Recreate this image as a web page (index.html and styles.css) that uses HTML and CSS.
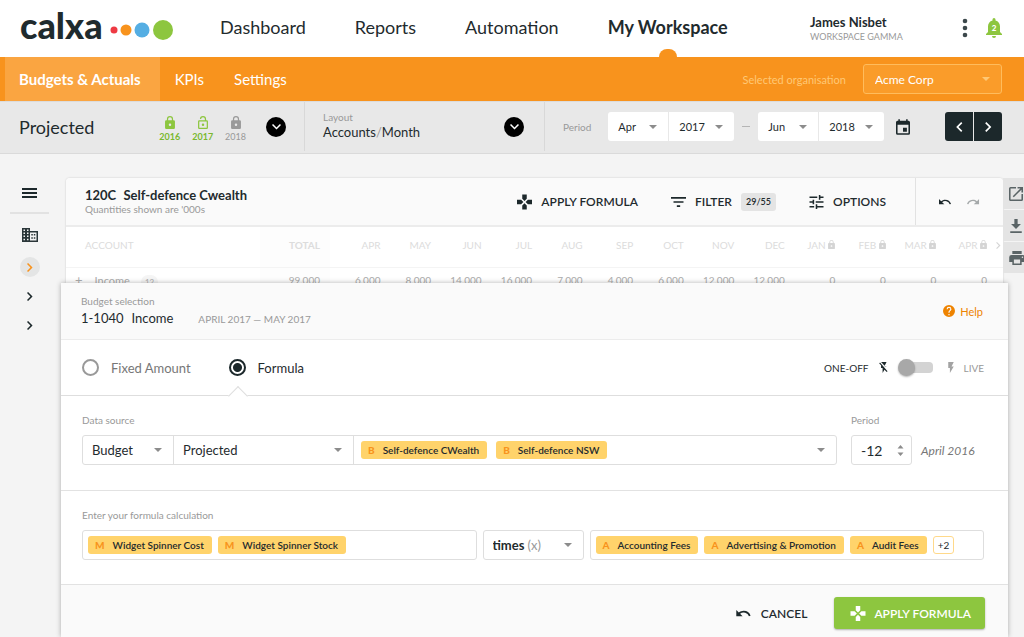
FILE: index.html
```html
<!DOCTYPE html>
<html lang="en">
  <head>
    <meta charset="UTF-8" />
    <meta name="viewport" content="width=device-width, initial-scale=1.0" />
    <title>Calxa - My Workspace</title>
    <link rel="stylesheet" href="styles.css">
  </head>
  <body>
    <!-- shared icons -->
    <svg class="sprite" aria-hidden="true">
      <symbol id="lock" viewBox="0 0 16 21">
        <path d="M14 7h-1V5A5 5 0 0 0 3 5v2H2a2 2 0 0 0-2 2v10a2 2 0 0 0 2 2h12a2 2 0 0 0 2-2V9a2 2 0 0 0-2-2zm-6 9a2 2 0 1 1 0-4 2 2 0 0 1 0 4zm3-9H5V5a3 3 0 0 1 6 0z" />
      </symbol>
      <symbol id="lock-open" viewBox="0 0 16 21">
        <path d="M8 16a2 2 0 1 0 0-4 2 2 0 0 0 0 4zm6-9h-1V5A5 5 0 0 0 3 5h2a3 3 0 0 1 6 0v2H2a2 2 0 0 0-2 2v10a2 2 0 0 0 2 2h12a2 2 0 0 0 2-2V9a2 2 0 0 0-2-2zm0 12H2V9h12z" />
      </symbol>
      <symbol id="chevron-right" viewBox="0 0 8 12">
        <path d="M0 10.6 4.6 6 0 1.4 1.4 0l6 6-6 6z" />
      </symbol>
      <symbol id="chevron-left" viewBox="0 0 8 12">
        <path d="M7.4 1.4 6 0 0 6l6 6 1.4-1.4L2.8 6z" />
      </symbol>
      <symbol id="chevron-down" viewBox="0 0 12 8">
        <path d="M1.4 0 6 4.6 10.6 0 12 1.4l-6 6-6-6z" />
      </symbol>
      <symbol id="pad" viewBox="0 0 20 20">
        <path d="M13 5.500V0H7v5.500l3 3zM5.500 7H0v6h5.500l3-3zM7 14.500V20h6v-5.500l-3-3zM14.500 7l-3 3 3 3H20V7z" />
      </symbol>
      <symbol id="undo" viewBox="0 0 22 10">
        <path d="M10.500 1c-2.600 0-5 1-6.900 2.600L0 0v9h9L5.400 5.400A8 8 0 0 1 18.100 9l2.300-.8A10.500 10.500 0 0 0 10.500 1z" />
      </symbol>
      <symbol id="redo" viewBox="0 0 22 10">
        <path d="M16.800 3.600A10.500 10.500 0 0 0 0 8.200L2.300 9A8 8 0 0 1 15 5.400L11.400 9h9V0z" />
      </symbol>
    </svg>

    <header class="header">
      <a href="#" class="logo" aria-label="calxa">
        <span class="logo__text">calxa</span>
        <svg width="66" height="22" viewBox="0 0 66 22">
          <circle cx="7" cy="12" r="3.500" fill="#ee3a43" />
          <circle cx="19" cy="12" r="5.500" fill="#f8931d" />
          <circle cx="35" cy="12" r="7.500" fill="#55aee3" />
          <circle cx="56" cy="12" r="10" fill="#8dc63f" />
        </svg>
      </a>
      <nav class="nav">
        <a href="#">Dashboard</a>
        <a href="#">Reports</a>
        <a href="#">Automation</a>
        <a href="#" class="active">My Workspace</a>
      </nav>
      <div class="user">
        <div class="user__name">James Nisbet</div>
        <div class="user__workspace">WORKSPACE GAMMA</div>
      </div>
      <div class="header__icons">
        <button class="icon-btn" aria-label="Menu">
          <svg width="6" height="20" viewBox="0 0 6 20" fill="#3c484b">
            <circle cx="3" cy="3" r="2.300" /><circle cx="3" cy="10" r="2.300" /><circle cx="3" cy="17" r="2.300" />
          </svg>
        </button>
        <button class="icon-btn bell" aria-label="Notifications">
          <svg width="16" height="20" viewBox="0 0 16 20" fill="#8dc63f">
            <path d="M8 20a2 2 0 0 0 2-2H6a2 2 0 0 0 2 2zm6-6V8.500c0-3-1.600-5.400-4.500-6.100V1.500a1.500 1.500 0 0 0-3 0v.9C3.600 3.100 2 5.500 2 8.500V14l-2 2v1h16v-1z" />
          </svg>
          <span class="bell__count">2</span>
        </button>
      </div>
    </header>

    <div class="subnav">
      <nav class="subnav__links">
        <a href="#" class="active">Budgets &amp; Actuals</a>
        <a href="#">KPIs</a>
        <a href="#">Settings</a>
      </nav>
      <div class="organisation">
        <label for="organisation">Selected organisation</label>
        <div class="select">
          <select id="organisation"><option>Acme Corp</option></select>
        </div>
      </div>
    </div>

    <div class="toolbar">
      <div class="toolbar__budget">
        <span class="toolbar__title">Projected</span>
        <div class="years">
          <div class="year year--on"><svg width="10" height="13"><use href="#lock" /></svg>2016</div>
          <div class="year year--on"><svg width="10" height="13"><use href="#lock-open" /></svg>2017</div>
          <div class="year"><svg width="10" height="13"><use href="#lock" /></svg>2018</div>
        </div>
        <button class="round-btn" aria-label="Choose budget"><svg width="9" height="6"><use href="#chevron-down" /></svg></button>
      </div>
      <div class="toolbar__layout">
        <div class="toolbar__text">
          <div class="small-label">Layout</div>
          <div class="toolbar__value">Accounts<i>/</i>Month</div>
        </div>
        <button class="round-btn" aria-label="Choose layout"><svg width="9" height="6"><use href="#chevron-down" /></svg></button>
      </div>
      <div class="toolbar__period">
        <span class="small-label">Period</span>
        <div class="select-pair">
          <div class="select"><select aria-label="From month"><option>Apr</option></select></div>
          <div class="select"><select aria-label="From year"><option>2017</option></select></div>
        </div>
        <span class="dash"></span>
        <div class="select-pair">
          <div class="select"><select aria-label="To month"><option>Jun</option></select></div>
          <div class="select"><select aria-label="To year"><option>2018</option></select></div>
        </div>
        <button class="icon-btn calendar" aria-label="Calendar">
          <svg width="14" height="16" viewBox="0 0 18 20" fill="#1c282b">
            <path d="M14 11H9v5h5zM13 0v2H5V0H3v2H2a2 2 0 0 0-2 2v14a2 2 0 0 0 2 2h14a2 2 0 0 0 2-2V4a2 2 0 0 0-2-2h-1V0zm3 18H2V7h14z" />
          </svg>
        </button>
        <div class="pager">
          <button aria-label="Previous"><svg width="7" height="10"><use href="#chevron-left" /></svg></button>
          <button aria-label="Next"><svg width="7" height="10"><use href="#chevron-right" /></svg></button>
        </div>
      </div>
    </div>

    <main class="workspace">
      <aside class="rail">
        <button class="icon-btn" aria-label="Toggle menu">
          <svg width="15" height="10" viewBox="0 0 15 10" fill="#1c282b"><path d="M0 0h15v2H0zM0 4h15v2H0zM0 8h15v2H0z" /></svg>
        </button>
        <hr />
        <button class="icon-btn rail__building" aria-label="Organisation">
          <svg width="16" height="14" viewBox="0 0 16 14" fill="#2a3639">
            <path fill-rule="evenodd" d="M0 0h8v3h8v11H0zM1.500 1.500V3H3V1.500zm3.500 0V3h1.500V1.500zM1.500 4.500V6H3V4.500zM5 4.500V6h1.500V4.500zM1.500 7.500V9H3V7.500zm3.500 0V9h1.500V7.500zM1.500 10.800v1.500H3v-1.500zm3.500 0v1.500h1.500v-1.500zM8 4.400v8.200h6.500V4.400zM9.300 6h1.500v1.500H9.300zm2.500 0h1.500v1.500h-1.500zM9.300 9.300h1.500v1.500H9.300zm2.500 0h1.500v1.500h-1.500z" />
          </svg>
        </button>
        <button class="rail__item active" aria-label="Section 1"><svg width="6" height="9"><use href="#chevron-right" /></svg></button>
        <button class="rail__item" aria-label="Section 2"><svg width="6" height="9"><use href="#chevron-right" /></svg></button>
        <button class="rail__item" aria-label="Section 3"><svg width="6" height="9"><use href="#chevron-right" /></svg></button>
      </aside>

      <div class="content">
        <section class="sheet">
          <div class="sheet__header">
            <div class="sheet__title">
              <h2><span>120C</span> Self-defence Cwealth</h2>
              <p>Quantities shown are '000s</p>
            </div>
            <div class="sheet__actions">
              <button class="action"><svg width="15" height="16"><use href="#pad" /></svg>APPLY FORMULA</button>
              <button class="action">
                <svg width="15" height="10" viewBox="0 0 18 12"><path d="M7 12h4v-2H7zM0 0v2h18V0zm3 7h12V5H3z" /></svg>FILTER<span class="count">29/55</span>
              </button>
              <button class="action">
                <svg width="15" height="14" viewBox="0 0 18 18"><path d="M0 14v2h6v-2zM0 2v2h10V2zm10 16v-2h8v-2h-8v-2H8v6zM4 6v2H0v2h4v2h2V6zm14 4V8H8v2zm-6-4h2V4h4V2h-4V0h-2z" /></svg>OPTIONS
              </button>
            </div>
            <div class="sheet__history">
              <button class="icon-btn" aria-label="Undo"><svg width="13" height="6" fill="#1c282b"><use href="#undo" /></svg></button>
              <button class="icon-btn" aria-label="Redo"><svg width="13" height="6" fill="#a5a9aa"><use href="#redo" /></svg></button>
            </div>
          </div>
          <div class="sheet__body">
            <table>
              <thead>
                <tr>
                  <th class="col-account">ACCOUNT</th>
                  <th class="col-total">TOTAL</th>
                  <th>APR</th>
                  <th>MAY</th>
                  <th>JUN</th>
                  <th>JUL</th>
                  <th>AUG</th>
                  <th>SEP</th>
                  <th>OCT</th>
                  <th>NOV</th>
                  <th>DEC</th>
                  <th>JAN <svg width="7" height="9"><use href="#lock" /></svg></th>
                  <th>FEB <svg width="7" height="9"><use href="#lock" /></svg></th>
                  <th>MAR <svg width="7" height="9"><use href="#lock" /></svg></th>
                  <th>APR <svg width="7" height="9"><use href="#lock" /></svg></th>
                  <th class="col-more"><svg width="5" height="7"><use href="#chevron-right" /></svg></th>
                </tr>
              </thead>
              <tbody>
                <tr>
                  <td class="col-account"><span class="plus">+</span>Income<span class="badge">12</span></td>
                  <td class="col-total">99,000</td>
                  <td>6,000</td>
                  <td>8,000</td>
                  <td>14,000</td>
                  <td>16,000</td>
                  <td>7,000</td>
                  <td>4,000</td>
                  <td>6,000</td>
                  <td>12,000</td>
                  <td>12,000</td>
                  <td>0</td>
                  <td>0</td>
                  <td>0</td>
                  <td>0</td>
                  <td></td>
                </tr>
              </tbody>
            </table>
          </div>
        </section>

        <form class="panel">
          <div class="panel__header">
            <div>
              <div class="small-label">Budget selection</div>
              <div class="panel__account">
                <span>1-1040</span><span>Income</span><span class="panel__range">APRIL 2017 — MAY 2017</span>
              </div>
            </div>
            <a href="#" class="help">
              <svg width="12" height="12" viewBox="0 0 20 20" fill="#ee8300">
                <path d="M10 0a10 10 0 1 0 0 20 10 10 0 0 0 0-20zm1 17H9v-2h2zm2.100-7.700-.9.900C11.400 10.900 11 11.500 11 13H9v-.5c0-1.100.4-2.100 1.200-2.800l1.200-1.300A2 2 0 1 0 8 7H6a4 4 0 0 1 8 0c0 .9-.4 1.700-.9 2.300z" />
              </svg>Help
            </a>
          </div>

          <div class="panel__mode">
            <label class="radio"><input type="radio" name="mode" />Fixed Amount</label>
            <label class="radio"><input type="radio" name="mode" checked />Formula</label>
            <div class="live">
              <label for="live">ONE-OFF</label>
              <svg width="9" height="11" viewBox="0 0 14 18" fill="#1c282b"><path d="M1.300 1 0 2.300l3 3V10h2.500v8l3.100-5.300L12.300 16.500l1.300-1.300zM12 7H8.500L12 0H3v.2l6.600 6.700 1 1z" /></svg>
              <input type="checkbox" id="live" class="switch" />
              <svg width="6" height="11" viewBox="0 0 10 20" fill="#a3a3a3"><path d="M0 0v11h3v9l7-12H6l4-8z" /></svg>
              <span class="live__off">LIVE</span>
            </div>
          </div>

          <div class="panel__row">
            <div class="source">
              <label class="small-label" for="source">Data source</label>
              <div class="field source__field">
                <div class="select source__type"><select id="source"><option>Budget</option></select></div>
                <div class="select source__budget"><select aria-label="Budget"><option>Projected</option></select></div>
                <div class="source__tags">
                  <span class="tag"><b>B</b>Self-defence CWealth</span>
                  <span class="tag"><b>B</b>Self-defence NSW</span>
                  <button type="button" class="caret" aria-label="Choose organisations"></button>
                </div>
              </div>
            </div>
            <div class="offset">
              <label class="small-label" for="offset">Period</label>
              <div class="offset__row">
                <div class="field offset__field">
                  <input type="text" id="offset" value="-12" />
                  <svg width="7" height="11" viewBox="0 0 7 11" fill="#8c8c8c"><path d="M3.500 0 6.500 3.500h-6zM3.500 11 .5 7.500h6z" /></svg>
                </div>
                <em>April 2016</em>
              </div>
            </div>
          </div>

          <div class="panel__row panel__row--formula">
            <div class="small-label">Enter your formula calculation</div>
            <div class="formula">
              <div class="field tags">
                <span class="tag"><b>M</b>Widget Spinner Cost</span>
                <span class="tag"><b>M</b>Widget Spinner Stock</span>
              </div>
              <div class="field select operator">
                <select aria-label="Operator"><option>times</option></select>
                <span class="operator__sign">(x)</span>
              </div>
              <div class="field tags">
                <span class="tag"><b>A</b>Accounting Fees</span>
                <span class="tag"><b>A</b>Advertising &amp; Promotion</span>
                <span class="tag"><b>A</b>Audit Fees</span>
                <button type="button" class="more">+2</button>
              </div>
            </div>
          </div>

          <div class="panel__footer">
            <button type="button" class="action"><svg width="16" height="7"><use href="#undo" /></svg>CANCEL</button>
            <button type="submit" class="btn-apply"><svg width="16" height="15"><use href="#pad" /></svg>APPLY FORMULA</button>
          </div>
        </form>
      </div>

      <div class="side-tools">
        <button aria-label="Open in new window">
          <svg width="14" height="14" viewBox="0 0 18 18"><path d="M16 16H2V2h7V0H2a2 2 0 0 0-2 2v14c0 1.100.9 2 2 2h14a2 2 0 0 0 2-2V9h-2zM11 0v2h3.600L4.800 11.800l1.400 1.400L16 3.400V7h2V0z" /></svg>
        </button>
        <button aria-label="Download">
          <svg width="14" height="14" viewBox="0 0 16 17"><path d="M14 6h-4V0H6v6H2l6 6zM1 15v2h14v-2z" /></svg>
        </button>
        <button aria-label="Print">
          <svg width="16" height="14" viewBox="0 0 20 18"><path d="M17 5H3a3 3 0 0 0-3 3v6h4v4h12v-4h4V8a3 3 0 0 0-3-3zm-3 11H6v-5h8zm3-7a1 1 0 1 1 0-2 1 1 0 0 1 0 2zM16 0H4v4h12z" /></svg>
        </button>
      </div>
    </main>
  </body>
</html>
```
FILE: styles.css
```css
* {
  box-sizing: border-box;
}

body {
  margin: 0;
  font-family: Lato, sans-serif;
  font-size: 13px;
  color: #1f2b2e;
  background-color: #f4f4f4;
  min-height: 100vh;
  display: flex;
  flex-direction: column;
  overflow: hidden;
}

a {
  color: inherit;
  text-decoration: none;
}

button,
input,
select {
  font: inherit;
  color: inherit;
}

button {
  padding: 0;
  border: none;
  background: none;
  cursor: pointer;
}

svg {
  display: block;
  flex: none;
}

.sprite {
  position: absolute;
  width: 0;
  height: 0;
}

.icon-btn {
  display: flex;
  align-items: center;
  justify-content: center;
}

.small-label {
  font-size: 10px;
  line-height: 14px;
  color: #999;
}

/* Select */

.select {
  position: relative;
  display: flex;
}

.select select {
  appearance: none;
  width: 100%;
  padding: 0 24px 0 11px;
  border: none;
  background: none;
  outline: none;
}

.select::after,
.caret::after {
  content: "";
  position: absolute;
  top: 50%;
  right: 11px;
  margin-top: -2px;
  border: 4px solid transparent;
  border-top-color: #8c8c8c;
  border-bottom: none;
  pointer-events: none;
}

/* Header */

.header {
  height: 57px;
  background-color: #fff;
  display: flex;
  align-items: center;
  padding: 0 22px 0 20px;
}

.logo {
  display: flex;
  align-items: center;
  width: 200px;
  gap: 4px;
}

.logo__text {
  font-size: 36px;
  line-height: 40px;
  font-weight: 900;
  margin-top: -8px;
}

.nav {
  display: flex;
  height: 100%;
  gap: 49px;
  font-size: 18px;
}

.nav a {
  position: relative;
  display: flex;
  align-items: center;
  padding-bottom: 3px;
}

.nav .active {
  font-weight: 700;
}

.nav .active::after {
  content: "";
  position: absolute;
  bottom: 0;
  left: 50%;
  width: 18px;
  height: 8px;
  margin-left: -9px;
  border-radius: 9px 9px 0 0;
  background-color: #f8931d;
}

.user {
  margin-left: auto;
  width: 152px;
}

.user__name {
  font-size: 13px;
  line-height: 16px;
  font-weight: 700;
}

.user__workspace {
  font-size: 9px;
  line-height: 14px;
  color: #999;
}

.header__icons {
  display: flex;
  align-items: center;
  gap: 18px;
  padding-bottom: 2px;
}

.bell {
  position: relative;
}

.bell__count {
  position: absolute;
  top: 4px;
  left: 0;
  width: 100%;
  font-size: 8px;
  line-height: 12px;
  font-weight: 900;
  color: #fff;
}

/* Sub navigation */

.subnav {
  height: 44px;
  background-color: #f8931d;
  color: #fff;
  display: flex;
  justify-content: space-between;
  padding: 0 22px 0 5px;
}

.subnav__links {
  display: flex;
  font-size: 15px;
}

.subnav__links a {
  display: flex;
  align-items: center;
  padding: 0 15px 1px;
}

.subnav__links .active {
  background-color: #faa541;
  font-weight: 700;
  padding: 0 19px 1px 14px;
}

.organisation {
  display: flex;
  align-items: center;
  gap: 17px;
  font-size: 11px;
  color: #ffc875;
}

.organisation .select {
  width: 139px;
  height: 30px;
  border: 1px solid #ffbc5c;
  border-radius: 3px;
  background-color: #fa9c2a;
  font-size: 12px;
  color: #fff;
}

.organisation .select::after {
  border-top-color: #ffc875;
}

/* Toolbar */

.toolbar {
  height: 53px;
  padding-bottom: 2px;
  background-color: #e8e8e8;
  border-top: 1px solid #dcdcdc;
  border-bottom: 1px solid #dadada;
  display: flex;
}

.toolbar > div {
  display: flex;
  align-items: center;
}

.toolbar__budget {
  width: 305px;
  padding: 0 18px 0 19px;
  border-right: 1px solid #d8d8d8;
}

.toolbar__title {
  flex: 1;
  font-size: 18px;
}

.years {
  display: flex;
  gap: 12px;
  margin-right: 20px;
  padding-top: 6px;
}

.year {
  display: flex;
  flex-direction: column;
  align-items: center;
  gap: 2px;
  font-size: 9px;
  line-height: 12px;
  color: #999;
  fill: #999;
}

.year--on {
  color: #7ab82f;
  fill: #8dc63f;
  font-weight: 700;
}

.round-btn {
  width: 20px;
  height: 20px;
  border-radius: 50%;
  background-color: #000;
  fill: #fff;
  display: flex;
  align-items: center;
  justify-content: center;
}

.toolbar__layout {
  width: 240px;
  padding: 0 20px 0 18px;
  justify-content: space-between;
  border-right: 1px solid #d8d8d8;
}

.toolbar__text {
  padding-bottom: 3px;
}

.toolbar__value {
  line-height: 16px;
}

.toolbar__value i {
  font-style: normal;
  color: #999;
}

.toolbar__period {
  flex: 1;
  padding: 0 22px 0 18px;
}

.select-pair {
  display: flex;
  gap: 1px;
  border-radius: 3px;
  overflow: hidden;
  font-size: 11px;
}

.select-pair .select {
  width: 60px;
  height: 29px;
  background-color: #fff;
}

.select-pair .select + .select {
  width: 65px;
}

.select-pair select {
  padding-left: 10px;
}

.toolbar__period .small-label {
  margin-right: 17px;
}

.dash {
  width: 8px;
  height: 1px;
  margin: 0 8px;
  background-color: #b5b5b5;
}

.calendar {
  margin-left: 12px;
}

.pager {
  display: flex;
  gap: 1px;
  margin-left: auto;
}

.pager button {
  width: 28px;
  height: 29px;
  background-color: #1c282b;
  fill: #fff;
  display: flex;
  align-items: center;
  justify-content: center;
}

.pager button:first-child {
  border-radius: 3px 0 0 3px;
}

.pager button:last-child {
  border-radius: 0 3px 3px 0;
}

/* Workspace */

.workspace {
  position: relative;
  flex: 1;
  display: flex;
}

.rail {
  width: 61px;
  padding: 34px 12px 0 10px;
  display: flex;
  flex-direction: column;
  align-items: center;
}

.rail hr {
  width: 100%;
  height: 2px;
  margin: 14px 0;
  border: none;
  background-color: #e2e2e2;
}

.rail__building {
  margin-bottom: 15px;
}

.rail__item {
  width: 20px;
  height: 20px;
  margin-bottom: 9px;
  border-radius: 50%;
  fill: #1c282b;
  display: flex;
  align-items: center;
  justify-content: center;
}

.rail__item.active {
  background-color: #e4e5e5;
  fill: #f8931d;
}

.content {
  flex: 1;
  min-width: 0;
  margin-right: 16px;
  padding-top: 24px;
  display: flex;
  flex-direction: column;
}

.sheet {
  margin: 0 5px;
  background-color: #fff;
  border-radius: 4px 4px 0 0;
  box-shadow: 0 0 2px rgba(0, 0, 0, 0.2);
}

.sheet__header {
  height: 49px;
  background-color: #fafafa;
  border-bottom: 2px solid #ececec;
  border-radius: 4px 4px 0 0;
  display: flex;
  align-items: center;
}

.sheet__title {
  flex: 1;
  padding-left: 19px;
}

.sheet__title h2 {
  margin: 0;
  font-size: 13px;
  line-height: 16px;
}

.sheet__title h2 span {
  margin-right: 4px;
}

.sheet__title p {
  margin: 0;
  font-size: 10px;
  line-height: 13px;
  color: #999;
}

.sheet__actions {
  display: flex;
  gap: 33px;
  margin-right: 29px;
}

.action {
  display: flex;
  align-items: center;
  gap: 9px;
  font-size: 12px;
  font-weight: 600;
  fill: #1c282b;
}

.count {
  padding: 0 5px;
  border-radius: 3px;
  background-color: #e4e4e4;
  font-size: 9px;
  line-height: 18px;
}

.sheet__history {
  width: 88px;
  height: 100%;
  border-left: 1px solid #e2e2e2;
  display: flex;
  align-items: center;
  justify-content: center;
  gap: 15px;
}

.sheet__body {
  height: 56px;
  overflow: hidden;
}

table {
  width: 100%;
  table-layout: fixed;
  border-collapse: collapse;
  font-size: 10px;
  text-align: right;
}

th,
td {
  padding: 0;
  white-space: nowrap;
}

th {
  height: 40px;
  padding-bottom: 3px;
  border-bottom: 1px solid #f4f4f4;
  font-weight: 400;
  color: #dcdcdc;
  fill: #d4d4d4;
}

th svg {
  display: inline-block;
}

td {
  height: 26px;
  color: #acacac;
}

th.col-account,
td.col-account {
  width: 194px;
  padding-left: 19px;
  text-align: left;
}

td.col-account {
  padding-left: 9px;
  font-size: 11px;
}

.plus {
  margin-right: 12px;
  font-size: 13px;
  line-height: 16px;
}

.badge {
  display: inline-block;
  margin-left: 11px;
  padding: 0 4px;
  border-radius: 9px;
  background-color: #f5f5f5;
  font-size: 8px;
  line-height: 14px;
}

.col-total {
  width: 70px;
  padding-right: 10px;
  background-color: #fdfdfd;
}

th.col-total {
  font-weight: 700;
}

th.col-more {
  width: 16px;
  padding-right: 2px;
}

/* Formula panel */

.panel {
  position: relative;
  z-index: 1;
  flex: 1;
  background-color: #fff;
  box-shadow: 0 0 5px rgba(0, 0, 0, 0.3);
  display: flex;
  flex-direction: column;
}

.panel__header {
  height: 57px;
  padding: 0 25px 0 20px;
  background-color: #fafafa;
  border-bottom: 1px solid #ececec;
  display: flex;
  align-items: center;
  justify-content: space-between;
}

.panel__account {
  display: flex;
  align-items: baseline;
  gap: 8px;
  line-height: 20px;
}

.panel__range {
  margin-left: 17px;
  font-size: 10px;
  color: #999;
}

.help {
  display: flex;
  align-items: center;
  gap: 5px;
  font-size: 11px;
  color: #ee8300;
}

.panel__mode {
  height: 56px;
  padding: 0 24px 0 21px;
  border-bottom: 1px solid #dedede;
  display: flex;
  gap: 38px;
}

.radio {
  position: relative;
  display: flex;
  align-items: center;
  gap: 12px;
  color: #777;
}

.radio input {
  appearance: none;
  width: 17px;
  height: 17px;
  margin: 0;
  border: 2px solid #999;
  border-radius: 50%;
}

.radio input:checked {
  border-color: #1c282b;
  background: radial-gradient(circle, #1c282b 4px, #fff 5px);
}

.radio:has(:checked) {
  color: #1f2b2e;
}

/* notch under the selected mode */
.radio:has(:checked)::after {
  content: "";
  position: absolute;
  left: 2px;
  bottom: -8px;
  width: 13px;
  height: 13px;
  border: 1px solid #dedede;
  border-right: none;
  border-bottom: none;
  background-color: #fff;
  transform: rotate(45deg);
}

.live {
  margin-left: auto;
  display: flex;
  align-items: center;
  gap: 10px;
  font-size: 10px;
}

.live__off {
  color: #999;
}

.switch {
  appearance: none;
  position: relative;
  width: 36px;
  height: 17px;
  margin: 0 4px 0 0;
}

.switch::before {
  content: "";
  position: absolute;
  inset: 3px 1px 3px 6px;
  border-radius: 4px;
  background-color: #d3d3d3;
}

.switch::after {
  content: "";
  position: absolute;
  top: 0;
  left: 0;
  width: 17px;
  height: 17px;
  border-radius: 50%;
  background-color: #a8a8a8;
  box-shadow: 0 1px 2px rgba(0, 0, 0, 0.3);
}

.switch:checked::after {
  left: 18px;
}

.panel__row {
  height: 95px;
  padding: 17px 24px 0 21px;
  border-bottom: 1px solid #e2e2e2;
  display: flex;
  gap: 14px;
}

.panel__row--formula {
  height: 94px;
  flex-direction: column;
  gap: 8px;
}

.field {
  height: 30px;
  border: 1px solid #dedede;
  border-radius: 3px;
  background-color: #fff;
}

.source,
.offset {
  display: flex;
  flex-direction: column;
  gap: 8px;
}

.source {
  flex: 1;
}

.source__field {
  display: flex;
}

.source__field .select {
  border-right: 1px solid #dedede;
}

.source__field select,
.operator select {
  padding-left: 9px;
}

.source__type {
  width: 91px;
}

.source__budget {
  width: 180px;
}

.source__tags {
  position: relative;
  flex: 1;
  padding: 0 7px;
  display: flex;
  align-items: center;
  gap: 9px;
}

.caret {
  position: absolute;
  top: 0;
  right: 0;
  width: 30px;
  height: 100%;
}

.tag {
  padding: 0 8px 0 7px;
  border-radius: 3px;
  background-color: #ffd36b;
  font-size: 10px;
  line-height: 18px;
  font-weight: 600;
  white-space: nowrap;
}

.tag b {
  margin-right: 8px;
  color: #f8931d;
}

.offset {
  width: 133px;
}

.offset__row {
  display: flex;
  align-items: center;
  gap: 9px;
  font-size: 12px;
  color: #777;
  white-space: nowrap;
}

.offset__field {
  width: 61px;
  padding: 0 7px 0 9px;
  display: flex;
  align-items: center;
  justify-content: space-between;
}

.offset__field input {
  width: 32px;
  padding: 0;
  border: none;
  outline: none;
  font-size: 14px;
  color: #1f2b2e;
}

.formula {
  display: flex;
  gap: 6px;
}

.tags {
  flex: 1 1 0;
  padding: 0 5px;
  display: flex;
  align-items: center;
  gap: 6px;
}

.operator {
  width: 101px;
}

.operator select {
  font-weight: 700;
}

.operator__sign {
  position: absolute;
  left: 44px;
  line-height: 28px;
  color: #999;
  pointer-events: none;
}

.more {
  height: 18px;
  padding: 0 4px;
  border: 1px solid #ffd98a;
  border-radius: 3px;
  font-size: 10px;
  line-height: 16px;
}

.panel__footer {
  flex: 1;
  padding: 12px 23px 8px;
  background-color: #fafafa;
  display: flex;
  align-items: center;
  justify-content: flex-end;
  gap: 27px;
}

.btn-apply {
  height: 32px;
  padding: 0 14px 0 16px;
  border-radius: 3px;
  background-color: #8dc63f;
  box-shadow: 0 1px 2px rgba(0, 0, 0, 0.3);
  color: #fff;
  fill: #fff;
  font-size: 12px;
  font-weight: 600;
  display: flex;
  align-items: center;
  gap: 8px;
}

/* Side tools */

.side-tools {
  position: absolute;
  top: 24px;
  right: 0;
  width: 21px;
  overflow: hidden;
  display: flex;
  flex-direction: column;
  gap: 1px;
}

.side-tools button {
  height: 31px;
  padding-left: 6px;
  background-color: #e4e4e4;
  fill: #5a6466;
}
```
